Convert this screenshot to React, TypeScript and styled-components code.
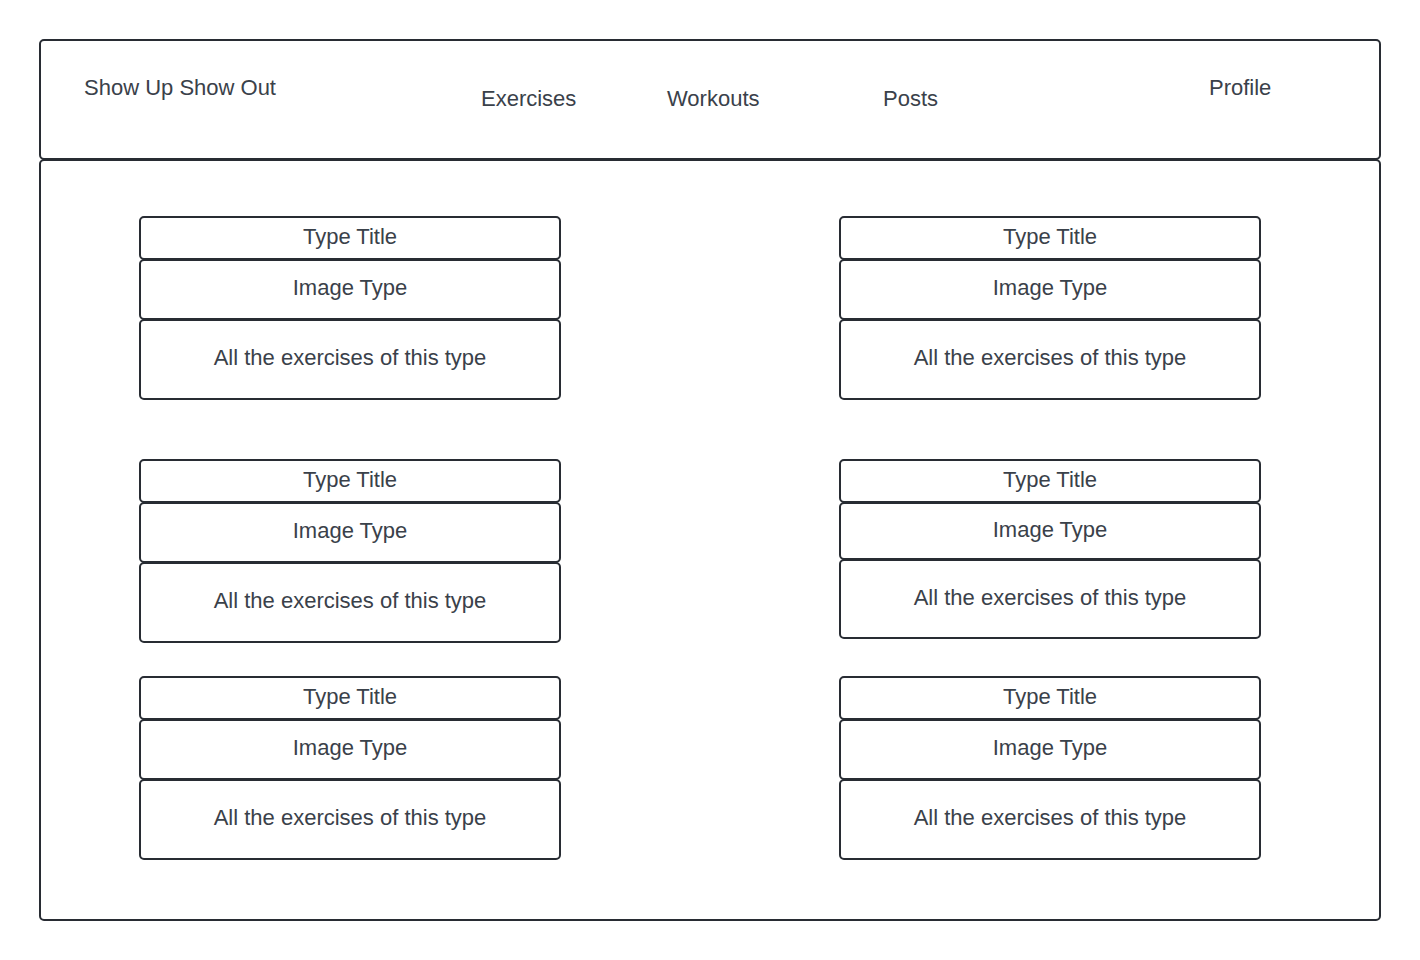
import React from 'react';
import styled, {createGlobalStyle} from 'styled-components';

const GlobalStyle = createGlobalStyle`
  html, body {
    margin: 0;
    padding: 0;
    background: #ffffff;
  }

  body {
    font-family: "Liberation Sans", Arial, sans-serif;
    color: #3a414a;
  }
`;

const Page = styled.div`
  width: 1420px;
  height: 960px;
  padding: 39px;
  box-sizing: border-box;
  display: flex;
  flex-direction: column;
`;

const Header = styled.header`
  height: 121px;
  flex-shrink: 0;
  box-sizing: border-box;
  border: 2px solid #282c33;
  border-radius: 5px;
  display: grid;
  grid-template-columns: 397px 186px 216px 326px auto;
  align-items: start;
  padding-left: 43px;
`;

type NavTextProps = {
    $top: number
}

const NavText = styled.span<NavTextProps>`
  font-size: 22px;
  line-height: 26px;
  margin-top: ${p => p.$top}px;
  white-space: nowrap;
`;

const Main = styled.main`
  flex: 1;
  box-sizing: border-box;
  border: 2px solid #282c33;
  border-radius: 5px;
  margin-top: -1px;
  padding: 55px 0 0 98px;
  display: grid;
  grid-template-columns: 422px 422px;
  column-gap: 278px;
  align-content: start;
`;

type CardProps = {
    $gap: number
}

const Card = styled.div<CardProps>`
  display: flex;
  flex-direction: column;
  margin-top: ${p => p.$gap}px;
`;

type CellProps = {
    $height: number
}

const Cell = styled.div<CellProps>`
  height: ${p => p.$height}px;
  box-sizing: border-box;
  border: 2px solid #282c33;
  border-radius: 5px;
  display: flex;
  align-items: center;
  justify-content: center;
  font-size: 22px;
  line-height: 26px;
  padding-bottom: 3px;
  margin-top: -1px;

  &:first-child {
    margin-top: 0;
  }
`;

const cards = [
    {id: 'l1', gap: 0, heights: [44, 61, 81]},
    {id: 'r1', gap: 0, heights: [44, 61, 81]},
    {id: 'l2', gap: 59, heights: [44, 61, 81]},
    {id: 'r2', gap: 59, heights: [44, 58, 80]},
    {id: 'l3', gap: 33, heights: [44, 61, 81]},
    {id: 'r3', gap: 33, heights: [44, 61, 81]},
];

export default function App() {
    return (
        <>
            <GlobalStyle/>
            <Page>
                <Header>
                    <NavText $top={34}>Show Up Show Out</NavText>
                    <NavText $top={45}>Exercises</NavText>
                    <NavText $top={45}>Workouts</NavText>
                    <NavText $top={45}>Posts</NavText>
                    <NavText $top={34}>Profile</NavText>
                </Header>
                <Main>
                    {cards.map(card => (
                        <Card key={card.id} $gap={card.gap}>
                            <Cell $height={card.heights[0]}>Type Title</Cell>
                            <Cell $height={card.heights[1]}>Image Type</Cell>
                            <Cell $height={card.heights[2]}>All the exercises of this type</Cell>
                        </Card>
                    ))}
                </Main>
            </Page>
        </>
    );
}
